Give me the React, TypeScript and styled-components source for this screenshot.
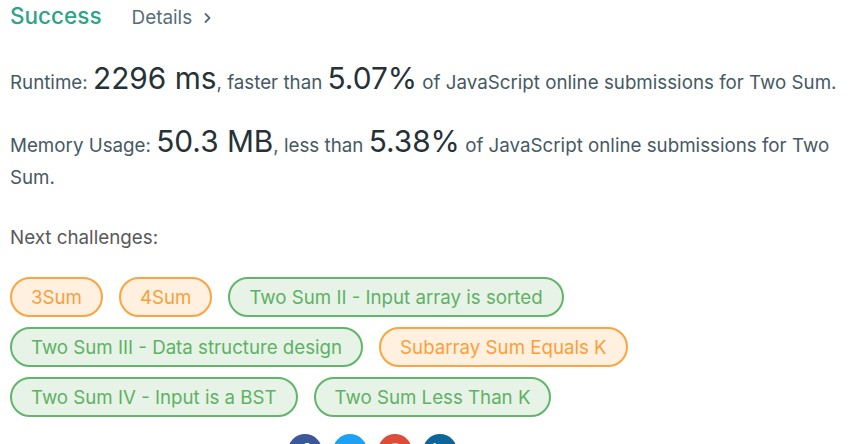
import React from "react";
import styled, { createGlobalStyle } from "styled-components";
import { FaFacebookF, FaTwitter, FaGoogle, FaLinkedinIn } from "react-icons/fa";

const Global = createGlobalStyle`
  html, body { margin: 0; padding: 0; background: #fff; }
  body { font-family: Inter, "Liberation Sans", sans-serif; color: #455a64; }
`;

const Page = styled.div`
  padding: 0 10px;
`;

const Header = styled.div`
  display: flex;
  align-items: baseline;
  gap: 30px;
  height: 32px;
  padding-top: 2px;
`;

const Status = styled.span`
  font-size: 22.5px;
  font-weight: 500;
  color: #2ea38a;
`;

const DetailsLink = styled.a`
  font-size: 18.9px;
  color: #546e7a;
  text-decoration: none;
  display: inline-flex;
  align-items: center;
  gap: 11px;
`;

const Para = styled.p`
  margin: 28px 0 0;
  font-size: 18.75px;
  line-height: 32px;
  color: #455a64;
  & + & {
    margin-top: 26px;
  }
`;

const Big = styled.span`
  font-size: 29.8px;
  color: #263238;
`;

const Label = styled.div`
  margin-top: 28px;
  font-size: 18.8px;
  color: #595959;
  line-height: 32px;
`;

const Tags = styled.div`
  margin-top: 23px;
  display: flex;
  flex-wrap: wrap;
  gap: 10px 16px;
  max-width: 640px;
`;

const Tag = styled.a<{ $tone: "green" | "orange" }>`
  box-sizing: border-box;
  height: 40px;
  padding: 0 19px;
  border-radius: 20px;
  display: inline-flex;
  align-items: center;
  font-size: 18.7px;
  text-decoration: none;
  border: 2px solid ${(p) => (p.$tone === "green" ? "#62b56a" : "#fca43f")};
  background: ${(p) => (p.$tone === "green" ? "#e6f3e6" : "#fff0df")};
  color: ${(p) => (p.$tone === "green" ? "#5fb165" : "#fa9f3a")};
`;

const Social = styled.div`
  display: flex;
  justify-content: center;
  gap: 11px;
  margin-top: 17px;
  padding-left: 10px;
  width: 705px;
`;

const Circle = styled.a<{ $bg: string }>`
  width: 34px;
  height: 34px;
  border-radius: 50%;
  background: ${(p) => p.$bg};
  color: #fff;
  display: inline-flex;
  align-items: center;
  justify-content: center;
  font-size: 16px;
`;

const Chevron = () => (
  <svg width="9" height="12" viewBox="0 0 9 12" fill="none">
    <path d="M2.5 2 L6.5 6 L2.5 10" stroke="#546e7a" strokeWidth="1.8" strokeLinecap="round" strokeLinejoin="round" />
  </svg>
);

const tags: { name: string; tone: "green" | "orange" }[] = [
  { name: "3Sum", tone: "orange" },
  { name: "4Sum", tone: "orange" },
  { name: "Two Sum II - Input array is sorted", tone: "green" },
  { name: "Two Sum III - Data structure design", tone: "green" },
  { name: "Subarray Sum Equals K", tone: "orange" },
  { name: "Two Sum IV - Input is a BST", tone: "green" },
  { name: "Two Sum Less Than K", tone: "green" },
];

export default function App() {
  return (
    <Page>
      <Global />
      <Header>
        <Status>Success</Status>
        <DetailsLink href="#">
          Details <Chevron />
        </DetailsLink>
      </Header>
      <Para>
        Runtime: <Big>2296 ms</Big>, faster than <Big>5.07%</Big> of JavaScript online submissions for Two Sum.
      </Para>
      <Para>
        Memory Usage: <Big>50.3 MB</Big>, less than <Big>5.38%</Big> of JavaScript online submissions for Two Sum.
      </Para>
      <Label>Next challenges:</Label>
      <Tags>
        {tags.map((t) => (
          <Tag key={t.name} $tone={t.tone} href="#">
            {t.name}
          </Tag>
        ))}
      </Tags>
      <Social>
        <Circle $bg="#3b5998"><FaFacebookF /></Circle>
        <Circle $bg="#1da1f2"><FaTwitter /></Circle>
        <Circle $bg="#dd4b39"><FaGoogle /></Circle>
        <Circle $bg="#0e6598"><FaLinkedinIn /></Circle>
      </Social>
    </Page>
  );
}
